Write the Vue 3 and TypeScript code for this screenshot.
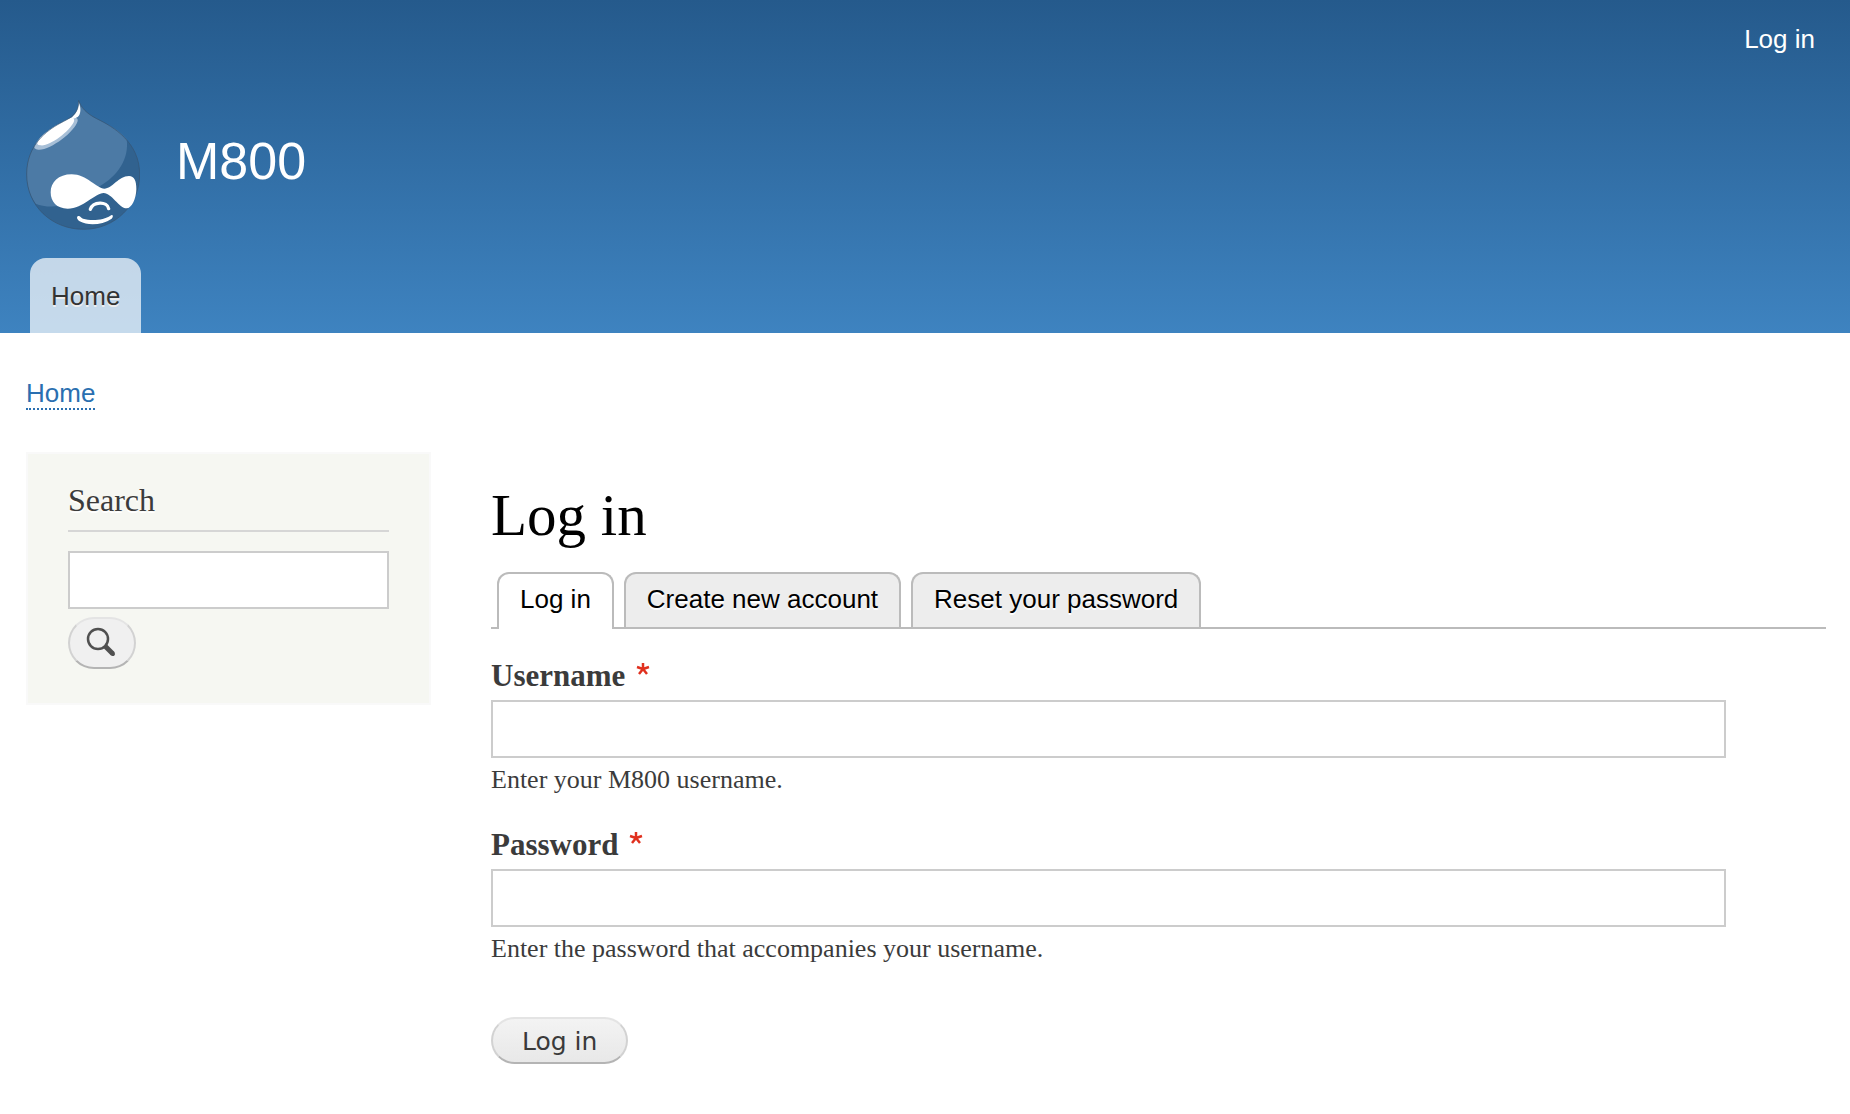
<script setup lang="ts">
import { ref } from 'vue'

interface Tab {
  label: string
  href: string
  active: boolean
}

interface Field {
  id: string
  label: string
  type: string
  hint: string
}

const tabs: Tab[] = [
  { label: 'Log in', href: '#login', active: true },
  { label: 'Create new account', href: '#register', active: false },
  { label: 'Reset your password', href: '#password', active: false },
]

const fields: Field[] = [
  { id: 'username', label: 'Username', type: 'text', hint: 'Enter your M800 username.' },
  {
    id: 'password',
    label: 'Password',
    type: 'password',
    hint: 'Enter the password that accompanies your username.',
  },
]

const search = ref('')
const values = ref<Record<string, string>>({ username: '', password: '' })
</script>

<template>
  <div class="page">
    <header class="header">
      <nav class="account" aria-label="User account">
        <a href="#login">Log in</a>
      </nav>
      <div class="branding">
        <a class="logo" href="#home" aria-label="Home">
          <svg viewBox="33 15 342 390" aria-hidden="true">
            <path
              d="M191 16C197 37 215 56 245 71C296 96 374 142 374 238C374 330 300 403 206 403C110 403 35 333 35 238C35 150 95 107 135 85C165 69 193 58 191 16Z"
              fill="#31628f"
            />
            <path
              d="M191 16C197 37 215 56 245 71C280 88 315 107 335 133C343 190 310 243 252 275L160 328C120 338 85 336 62 326C42 298 35 268 35 238C35 150 95 107 135 85C165 69 193 58 191 16Z"
              fill="#4c7aa5"
            />
            <path
              d="M59 152C75 118 120 90 165 72C178 66 190 66 188 78C180 110 105 167 70 164C60 163 56 158 59 152Z"
              fill="#a7bfd7"
            />
            <path
              d="M68 141C82 113 130 86 162 71C174 66 181 71 176 82C162 111 102 156 76 151C67 150 65 147 68 141Z"
              fill="#fff"
            />
            <path d="M191 20C198 38 199 56 188 66C181 71 168 72 158 75C177 65 191 48 191 20Z" fill="#fff" />
            <path
              d="M191 16C197 37 215 56 245 71C296 96 374 142 374 238C374 330 300 403 206 403C110 403 35 333 35 238C35 150 95 107 135 85C165 69 193 58 191 16Z"
              fill="none"
              stroke="#36536f"
              stroke-width="2"
            />
            <path
              d="M170 238C215 238 245 281 268 281C292 281 310 243 342 243C358 243 364 258 364 282C364 310 350 340 335 340C312 340 290 294 266 294C240 294 205 341 158 341C125 341 107 320 107 292C107 262 130 238 170 238Z"
              fill="#fff"
            />
            <path
              d="M226 343C234 319 277 318 281 341"
              fill="none"
              stroke="#fff"
              stroke-width="10"
              stroke-linecap="round"
            />
            <path
              d="M188 364C194 360 197 368 204 371C230 378 268 375 286 362C293 357 297 364 290 371C262 390 220 393 194 379C187 375 184 367 188 364Z"
              fill="#fff"
            />
          </svg>
        </a>
        <a class="site-name" href="#home">M800</a>
      </div>
      <nav class="menu" aria-label="Main navigation">
        <a href="#home">Home</a>
      </nav>
    </header>

    <div class="body">
      <nav class="breadcrumb" aria-label="Breadcrumb">
        <a href="#home">Home</a>
      </nav>

      <div class="columns">
        <aside class="sidebar">
          <h2><label for="search">Search</label></h2>
          <form role="search" @submit.prevent>
            <input id="search" v-model="search" class="text-box" type="search" />
            <button class="pill search-button" type="submit" aria-label="Search">
              <svg viewBox="0 0 32 32" aria-hidden="true">
                <circle cx="13" cy="13" r="10" fill="none" stroke="#505050" stroke-width="2.5" />
                <path d="M20 20L28 28" stroke="#505050" stroke-width="5" stroke-linecap="butt" />
                <path d="M27 27L28 28" stroke="#505050" stroke-width="4" stroke-linecap="round" />
              </svg>
            </button>
          </form>
        </aside>

        <main class="main">
          <h1>Log in</h1>
          <nav aria-label="Tabs">
            <ul class="tabs">
              <li v-for="tab in tabs" :key="tab.label" :class="{ active: tab.active }">
                <a :href="tab.href">{{ tab.label }}</a>
              </li>
            </ul>
          </nav>
          <form class="login" @submit.prevent>
            <div v-for="field in fields" :key="field.id" class="field">
              <label :for="field.id">
                {{ field.label }}
                <svg class="required" viewBox="0 0 14 14" aria-hidden="true">
                  <path
                    d="M7 7V1M7 7L1 5M7 7L13 5M7 7L3 12M7 7L11 12"
                    stroke="#e0301e"
                    stroke-width="2.5"
                  />
                </svg>
              </label>
              <input
                :id="field.id"
                v-model="values[field.id]"
                class="text-box"
                :type="field.type"
                :aria-describedby="field.id + '-hint'"
                required
              />
              <p :id="field.id + '-hint'">{{ field.hint }}</p>
            </div>
            <button class="pill submit" type="submit">Log in</button>
          </form>
        </main>
      </div>
    </div>
  </div>
</template>

<style>
body {
  margin: 0;
  background: #fff;
}
</style>

<style scoped>
.page {
  color: #3b3b3b;
  font-family: 'Liberation Serif', Georgia, serif;
  font-size: 26px;
  line-height: 30px;
}

a {
  text-decoration: none;
}

h1,
h2,
p,
ul {
  margin: 0;
  padding: 0;
  font-weight: 400;
}

.header,
.breadcrumb,
.tabs {
  font-family: 'Liberation Sans', Arial, sans-serif;
}

.header {
  padding: 24px 35px 0 26px;
  background: linear-gradient(to bottom, #255a8c 0%, #3e83c0 100%);
}

.account {
  display: flex;
  justify-content: flex-end;
}

.account a,
.site-name {
  color: #fff;
}

.branding {
  display: flex;
  align-items: flex-start;
  gap: 36px;
  margin-top: 46px;
}

.logo svg {
  display: block;
  width: 114px;
  height: 130px;
}

.site-name {
  margin-top: 31px;
  font-size: 52px;
  line-height: 60px;
}

.menu {
  display: flex;
  margin-top: 28px;
  padding-left: 4px;
}

.menu a {
  padding: 23px 21px 22px;
  border-radius: 16px 16px 0 0;
  background: rgba(255, 255, 255, 0.7);
  color: #333;
  text-shadow: 0 2px #eee;
}

.body {
  padding: 45px 24px 48px 26px;
}

.breadcrumb {
  display: flex;
}

.breadcrumb a {
  border-bottom: 2px dotted #2a6fb0;
  color: #2a6fb0;
}

.columns {
  display: flex;
  align-items: flex-start;
  gap: 60px;
  margin-top: 42px;
}

.sidebar {
  box-sizing: border-box;
  flex: none;
  width: 22.5%;
  padding: 28px 40px 34px;
  border: 2px solid #f9f9f9;
  background: #f6f7f2;
}

.sidebar h2 {
  margin-bottom: 19px;
  padding-bottom: 12px;
  border-bottom: 2px solid #d6d6d6;
  font-size: 32px;
  line-height: 36px;
  text-shadow: 0 2px #fff;
}

.text-box {
  box-sizing: border-box;
  display: block;
  width: 100%;
  height: 58px;
  margin: 0;
  padding: 4px 8px;
  border: 2px solid #ccc;
  border-radius: 0;
  outline: none;
  background: #fff;
  color: #3b3b3b;
  font: inherit;
  appearance: none;
}

.pill {
  box-sizing: border-box;
  border: 2px solid #d2d2d2;
  border-top-color: #e4e4e4;
  border-bottom-color: #b4b4b4;
  border-radius: 26px;
  color: #3a3a3a;
  cursor: pointer;
}

.search-button {
  display: flex;
  align-items: center;
  justify-content: center;
  width: 68px;
  height: 52px;
  margin-top: 8px;
  padding: 0 2px 2px 0;
  background: #f0f0f0;
}

.search-button svg {
  width: 32px;
  height: 32px;
}

.main {
  flex: 1;
  min-width: 0;
  padding-top: 30px;
}

h1 {
  color: #000;
  font-size: 59px;
  line-height: 66px;
}

.tabs {
  display: flex;
  gap: 10px;
  margin-top: 24px;
  padding-left: 6px;
  border-bottom: 2px solid #bbb;
  list-style: none;
}

.tabs li {
  border: 2px solid #bbb;
  border-bottom: 0;
  border-radius: 12px 12px 0 0;
  background: #ededed;
  text-shadow: 0 2px #fff;
}

.tabs .active {
  margin-bottom: -2px;
  background: #fff;
}

.tabs a {
  display: block;
  padding: 10px 21px 13px;
  color: #000;
}

.login {
  margin-top: 29px;
}

.field {
  margin-bottom: 32px;
}

.field label {
  display: flex;
  align-items: flex-start;
  gap: 11px;
  margin-bottom: 6px;
  font-size: 31px;
  font-weight: 700;
  line-height: 36px;
}

.required {
  width: 14px;
  height: 14px;
  margin-top: 4px;
}

.field .text-box {
  width: 92.5%;
}

.field p {
  margin-top: 7px;
}

.submit {
  height: 47px;
  margin-top: 21px;
  padding: 2px 29px 0;
  background: linear-gradient(to bottom, #f3f3f3, #e8e8e8);
  font-family: 'DejaVu Sans', Verdana, sans-serif;
  font-size: 25px;
  line-height: 30px;
}
</style>
